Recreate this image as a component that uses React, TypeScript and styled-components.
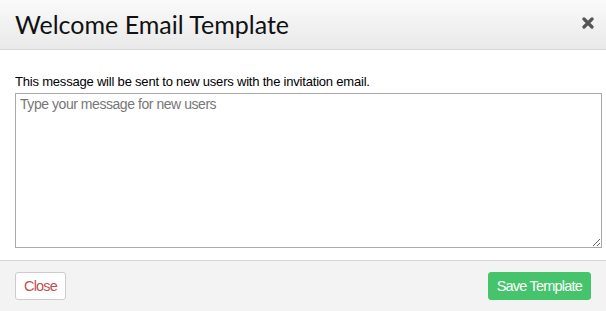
import React from 'react';
import styled, { createGlobalStyle } from 'styled-components';

const colores = {
  borde: '#d6d6d6',
  texto: '#111',
  verde: '#45c46c',
  rojo: '#c0504d',
};

const Global = createGlobalStyle`
  html, body {
    margin: 0;
    background: #fff;
    font-family: "Liberation Sans", Arial, sans-serif;
  }
`;

const Modal = styled.div`
  width: 606px;
  height: 311px;
  display: flex;
  flex-direction: column;
  background: #fff;
  overflow: hidden;
`;

const Cabecera = styled.div`
  height: 49px;
  flex-shrink: 0;
  display: flex;
  align-items: center;
  justify-content: space-between;
  padding: 0 12px 0 15px;
  background: linear-gradient(to bottom, #fafafa, #e9e9e9);
  border-bottom: 1px solid ${colores.borde};
`;

const Titulo = styled.h1`
  margin: 0;
  font-family: "Lato", "Open Sans", sans-serif;
  font-weight: 400;
  font-size: 25px;
  color: ${colores.texto};
  padding-bottom: 2px;
`;

const Cerrar = styled.button`
  border: none;
  background: none;
  padding: 0;
  cursor: pointer;
  display: flex;
  margin-bottom: 4px;
`;

const Cuerpo = styled.div`
  flex: 1;
  padding: 24px 4px 0 15px;
  display: flex;
  flex-direction: column;
`;

const Leyenda = styled.p`
  margin: 0 0 4px;
  font-size: 13px;
  line-height: 15px;
  letter-spacing: -0.2px;
  color: #000;
`;

const Area = styled.textarea`
  width: 587px;
  height: 155px;
  box-sizing: border-box;
  border: 1px solid #a9a9a9;
  padding: 2px 4px;
  font-family: "Liberation Sans", Arial, sans-serif;
  font-size: 14px;
  letter-spacing: -0.45px;
  resize: both;
  outline: none;
  &::placeholder {
    color: #777;
  }
`;

const Pie = styled.div`
  height: 50px;
  flex-shrink: 0;
  display: flex;
  align-items: center;
  justify-content: space-between;
  padding: 0 15px 0 15px;
  background: #f3f3f3;
  border-top: 1px solid ${colores.borde};
`;

const Boton = styled.button<{ $primario?: boolean }>`
  height: 28px;
  padding: 0 8px;
  border-radius: 3px;
  font-family: "Liberation Sans", Arial, sans-serif;
  font-size: 14.5px;
  letter-spacing: -0.8px;
  cursor: pointer;
  border: 1px solid ${(p) => (p.$primario ? colores.verde : '#ccc')};
  background: ${(p) => (p.$primario ? colores.verde : '#fff')};
  color: ${(p) => (p.$primario ? '#fff' : colores.rojo)};
`;

export default function App() {
  return (
    <>
      <Global />
      <Modal>
        <Cabecera>
          <Titulo>Welcome Email Template</Titulo>
          <Cerrar aria-label="close">
            <svg width="12" height="12" viewBox="0 0 12 12">
              <path d="M2 2 L10 10 M10 2 L2 10" stroke="#555" strokeWidth="3.2" strokeLinecap="round" />
            </svg>
          </Cerrar>
        </Cabecera>
        <Cuerpo>
          <Leyenda>This message will be sent to new users with the invitation email.</Leyenda>
          <Area placeholder="Type your message for new users" />
        </Cuerpo>
        <Pie>
          <Boton>Close</Boton>
          <Boton $primario>Save Template</Boton>
        </Pie>
      </Modal>
    </>
  );
}
